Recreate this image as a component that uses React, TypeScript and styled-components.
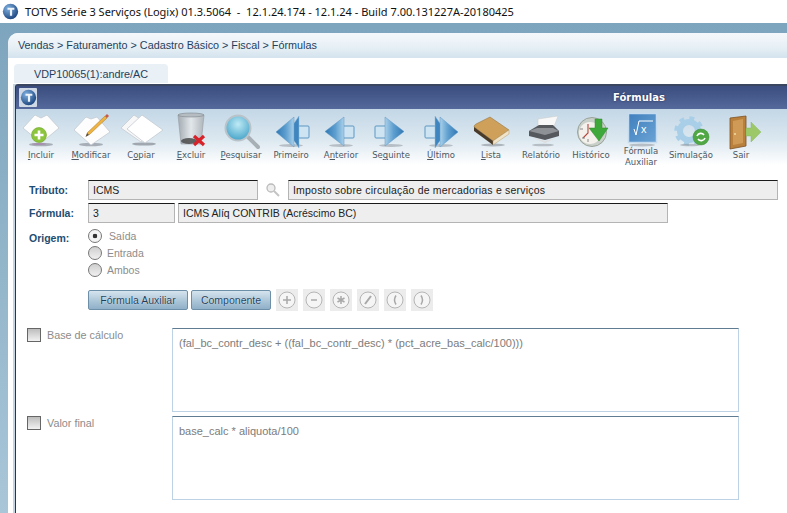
import React from "react";
import styled, { createGlobalStyle } from "styled-components";

const GlobalStyle = createGlobalStyle`
  html, body { margin: 0; padding: 0; background: #fff; }
  #root { width: 787px; height: 513px; overflow: hidden; }
`;

const Page = styled.div`
  width: 787px;
  height: 513px;
  display: flex;
  flex-direction: column;
  overflow: hidden;
  font-family: "Liberation Sans", Arial, sans-serif;
`;

const TitleBar = styled.div`
  height: 23px;
  flex: none;
  display: flex;
  align-items: center;
  gap: 6px;
  padding-left: 2px;
  background: #fff;
  color: #111;
  font-family: "Noto Sans", sans-serif;
  font-size: 11px;
  white-space: pre;
`;

const Shell = styled.div`
  flex: 1;
  min-height: 0;
  padding: 10px 0 0 8px;
  background: linear-gradient(#7da5bd, #a9c6d8);
  display: flex;
`;

const Panel = styled.div`
  flex: 1;
  min-width: 0;
  background: #fff;
  border-top-left-radius: 10px;
  display: flex;
  flex-direction: column;
`;

const Crumbs = styled.div`
  height: 25px;
  flex: none;
  box-sizing: border-box;
  padding: 0 0 2px 10px;
  display: flex;
  align-items: center;
  color: #1f3f5e;
  font-size: 10.8px;
  border-top-left-radius: 10px;
  background: linear-gradient(#f4f8fb, #e9f1f6 50%, #d4e3ee);
`;

const TabRow = styled.div`
  height: 19px;
  flex: none;
  margin-top: 6px;
  padding-left: 6px;
  display: flex;
`;

const Tab = styled.div`
  width: 154px;
  display: flex;
  align-items: center;
  justify-content: center;
  background: #e9f0f6;
  border-radius: 4px 4px 0 0;
  color: #1f3f5e;
  font-size: 10.8px;
`;

const WindowWrap = styled.div`
  flex: 1;
  min-height: 0;
  margin: 1px 0 0 5px;
  padding-left: 2px;
  background: #c3d4e2;
`;

const Frame = styled.div`
  height: 100%;
  background: #fff;
  border-left: 1px solid #1b3a5c;
  border-top: 2px solid #3a4660;
  border-top-left-radius: 3px;
  display: flex;
  flex-direction: column;
`;

const WindowBar = styled.div`
  height: 23px;
  flex: none;
  padding-left: 3px;
  display: flex;
  align-items: center;
  background: linear-gradient(#3a4d7e, #56699c);
`;

const LogoBox = styled.div`
  width: 18px;
  height: 19px;
  flex: none;
  display: flex;
  align-items: center;
  justify-content: center;
  background: #cfd9e6;
  border-radius: 1px;
`;

const WindowTitle = styled.div`
  margin-left: 576px;
  color: #fff;
  font-family: "DejaVu Sans", sans-serif;
  font-size: 10px;
  font-weight: bold;
  text-shadow: 0 0 2px #1c2a50;
`;

const Toolbar = styled.div`
  height: 56px;
  flex: none;
  padding-top: 1px;
  box-sizing: border-box;
  display: flex;
  background: linear-gradient(#c3d7e6, #dce8f0 55%, #fff);
`;

const ToolItem = styled.div`
  width: 50px;
  flex: none;
  display: flex;
  flex-direction: column;
  align-items: center;
  color: #4d5862;
`;

const ToolIcon = styled.svg`
  width: 40px;
  height: 35px;
  flex: none;
  overflow: visible;
`;

const ToolLabel = styled.div`
  height: 22px;
  margin-top: 1px;
  display: flex;
  align-items: center;
  text-align: center;
  font-family: "DejaVu Sans", sans-serif;
  font-size: 8.5px;
  line-height: 10.5px;
  white-space: nowrap;
  u { text-underline-offset: 1px; }
`;

const Form = styled.div`
  flex: 1;
  min-height: 0;
  padding: 15px 8px 0 13px;
  display: flex;
  flex-direction: column;
`;

const FieldRow = styled.div`
  height: 20px;
  margin-bottom: 3px;
  display: flex;
  align-items: stretch;
  gap: 3px;
`;

const FieldLabel = styled.div`
  width: 56px;
  flex: none;
  display: flex;
  align-items: center;
  color: #1d4d72;
  font-size: 10.5px;
  font-weight: bold;
`;

const Field = styled.div<{ $w: number; $track?: number }>`
  width: ${(p) => p.$w}px;
  flex: none;
  box-sizing: border-box;
  padding-left: 4px;
  display: flex;
  align-items: center;
  background: #eeeeee;
  border: 1px solid #b4b4b4;
  border-top-color: #1a1a1a;
  color: #222;
  font-size: 10.5px;
  letter-spacing: ${(p) => p.$track ?? 0}px;
`;

const SearchSlot = styled.svg`
  width: 24px;
  height: 20px;
  flex: none;
`;

const OriginRow = styled.div`
  display: flex;
  margin-top: 1px;
  height: 60px;
  gap: 3px;
`;

const OriginLabel = styled(FieldLabel)`
  height: 17px;
  margin-top: 2px;
`;

const RadioList = styled.div`
  display: flex;
  flex-direction: column;
`;

const RadioRow = styled.div`
  height: 17px;
  display: flex;
  align-items: center;
  gap: 5px;
  color: #8c8c8c;
  font-size: 10.5px;
`;

const RadioMark = styled.span<{ $on?: boolean }>`
  width: 14px;
  height: 14px;
  box-sizing: border-box;
  flex: none;
  border: 1px solid #777;
  border-radius: 50%;
  background: ${(p) =>
    p.$on
      ? "radial-gradient(circle, #333 0 2px, #f4f4f4 2.6px)"
      : "linear-gradient(#cfcfcf, #f0f0f0)"};
`;

const RadioText = styled.span<{ $on?: boolean }>`
  margin-left: ${(p) => (p.$on ? "2px" : "0")};
`;

const ActionRow = styled.div`
  height: 22px;
  margin: 2px 0 17px 59px;
  display: flex;
  align-items: center;
`;

const ActionButton = styled.div<{ $w: number }>`
  width: ${(p) => p.$w}px;
  height: 20px;
  margin-right: 3px;
  box-sizing: border-box;
  display: flex;
  align-items: center;
  justify-content: center;
  border: 1px solid #6d8fa8;
  border-radius: 2px;
  background: linear-gradient(#d6e4ee, #a9c3d6 60%, #8fb0c8);
  color: #1d3f5c;
  font-size: 10.5px;
  text-shadow: 0 0 1px #fff;
`;

const OpGroup = styled.div`
  margin-left: 2px;
  display: flex;
  gap: 5px;
`;

const OpButton = styled.div`
  width: 22px;
  height: 22px;
  display: flex;
  align-items: center;
  justify-content: center;
  background: #ececec;
`;

const OpIcon = styled.svg`
  width: 18px;
  height: 18px;
`;

const ExprRow = styled.div`
  height: 84px;
  margin-bottom: 4px;
  display: flex;
`;

const CheckCol = styled.div`
  width: 143px;
  flex: none;
  display: flex;
  align-items: flex-start;
  gap: 6px;
  color: #8c8c8c;
  font-size: 10.8px;
  margin: 0 2px 0 -2px;
`;

const CheckBox = styled.span`
  width: 14px;
  height: 14px;
  flex: none;
  box-sizing: border-box;
  border: 1px solid #666;
  background: linear-gradient(#bdbdbd, #f2f2f2);
`;

const CheckText = styled.span`
  line-height: 14px;
`;

const Expr = styled.div`
  width: 567px;
  flex: none;
  box-sizing: border-box;
  padding: 8px 6px;
  border: 1px solid #bdd2e4;
  border-top-color: #5f7c93;
  color: #7c7c7c;
  font-size: 11px;
  white-space: pre;
`;

const Logo = ({ size }: { size: number }) => (
  <svg width={size} height={size} viewBox="0 0 20 20" style={{ flex: "none" }}>
    <defs>
      <radialGradient id="logoG" cx="35%" cy="30%" r="80%">
        <stop offset="0" stopColor="#7fb0e0" />
        <stop offset="1" stopColor="#153e78" />
      </radialGradient>
    </defs>
    <circle cx="10" cy="10" r="9" fill="url(#logoG)" />
    <path d="M6.5 5.5h8v2.4h-2.6v7h-2.6v-7H6.5z" fill="#eef3f8" />
  </svg>
);

const Sheet = ({ d }: { d: string }) => (
  <>
    <ellipse cx="20" cy="34.500" rx="12" ry="1.800" fill="#7f848d" opacity=".6" />
    <path d={d} fill="#fdfdfd" stroke="#c4cad2" strokeWidth=".8" strokeLinejoin="round" />
  </>
);

// shared arrow drawing, pointing left; `dbl` adds the second head of Primeiro/Último
const Arrow = ({ id, dbl, flipAt }: { id: string; dbl?: boolean; flipAt?: number }) => (
  <>
    <defs>
      <linearGradient id={id} x1="0" y1="0" x2="1" y2="0">
        <stop offset="0" stopColor="#2f78b4" />
        <stop offset=".55" stopColor="#5f9fd0" />
        <stop offset="1" stopColor="#a9d0ea" />
      </linearGradient>
    </defs>
    <ellipse cx="20" cy="35.500" rx="12" ry="1.400" fill="#8a8f98" opacity=".5" />
    <g transform={flipAt ? `translate(${flipAt} 0) scale(-1 1)` : undefined}>
      <rect
        x={dbl ? 24 : 20}
        y="16"
        width={dbl ? 14 : 13}
        height="12"
        rx="1"
        fill="#cfe4f2"
        stroke="#5d97c3"
      />
      {dbl && <path d="M17 22 28 6v32z" fill="#3f86c0" stroke="#8fbbdb" strokeWidth=".5" />}
      <path
        d={dbl ? "M5 22 23 7v30z" : "M4 21.500 23 7v29z"}
        fill={`url(#${id})`}
        stroke="#5d97c3"
        strokeWidth=".5"
        strokeLinejoin="round"
      />
    </g>
  </>
);

const icons: Record<string, React.ReactNode> = {
  incluir: (
    <>
      <Sheet d="M2 18 14 5l6 3 6-3 12 13-18 15z" />
      <circle cx="18" cy="25" r="7.500" fill="#8cc43c" stroke="#6fa52a" strokeWidth=".6" />
      <path d="M18 20.500v9M13.500 25h9" stroke="#fff" strokeWidth="2.600" />
      <ellipse cx="18" cy="34" rx="7" ry="1" fill="#a77ca8" opacity=".6" />
    </>
  ),
  modificar: (
    <>
      <Sheet d="M3 20 15 7l5 2 6-2 13 15-19 13z" />
      <path d="M16 23 34 6l2 2-18 17z" fill="#eeb43f" stroke="#a9742a" strokeWidth=".5" />
      <path d="M34 6l2-2 2 2-2 2z" fill="#c85a4a" />
      <path d="M16 23l-1.500 4 3.500-2z" fill="#5a4a36" />
    </>
  ),
  copiar: (
    <>
      <ellipse cx="23" cy="34" rx="12" ry="1.600" fill="#7d828a" opacity=".65" />
      <path d="M0 18 13 5l20 13-13 14z" fill="#f7f7f7" stroke="#c4cad2" strokeWidth=".8" />
      <path d="M6 19 21 5l21 15-18 13z" fill="#fff" stroke="#c4cad2" strokeWidth=".8" />
    </>
  ),
  excluir: (
    <>
      <defs>
        <linearGradient id="canG" x1="0" x2="1" y1="0" y2="0">
          <stop offset="0" stopColor="#a3abb1" />
          <stop offset=".5" stopColor="#e2e7ea" />
          <stop offset="1" stopColor="#aeb5bb" />
        </linearGradient>
      </defs>
      <path d="M7 5h26l-3 29H10z" fill="url(#canG)" stroke="#959ca2" strokeWidth=".6" />
      <ellipse cx="20" cy="5" rx="13" ry="2" fill="#b5bcc2" stroke="#7f868c" strokeWidth=".6" />
      <ellipse cx="18" cy="31" rx="8" ry="3" fill="#4a4a4a" opacity=".85" />
      <path d="M23 26l10 9M33 26l-10 9" stroke="#d8222a" strokeWidth="3.200" />
    </>
  ),
  pesquisar: (
    <>
      <defs>
        <radialGradient id="lensG" cx="50%" cy="35%" r="70%">
          <stop offset="0" stopColor="#bfeaf5" />
          <stop offset="1" stopColor="#3d9fc6" />
        </radialGradient>
      </defs>
      <path d="M27 27l10 10" stroke="#a8b0b5" strokeWidth="4" strokeLinecap="round" />
      <circle cx="17" cy="18" r="12.500" fill="url(#lensG)" stroke="#b9c3c9" strokeWidth="2" />
    </>
  ),
  primeiro: <Arrow id="arrP" dbl />,
  anterior: <Arrow id="arrA" />,
  seguinte: <Arrow id="arrS" flipAt={37} />,
  ultimo: <Arrow id="arrU" dbl flipAt={42} />,
  lista: (
    <>
      <ellipse cx="22" cy="35" rx="12" ry="1.500" fill="#8a8f98" opacity=".6" />
      <path d="M3 17Q3 15 5 14L19 7 38 20 22 31z" fill="#cfa05a" stroke="#8d6a34" strokeWidth=".5" />
      <path d="M3 17v4l19 14v-4z" fill="#4a3a2a" />
      <path d="M22 31v4l16-11v-4z" fill="#f0e3c8" stroke="#a8905c" strokeWidth=".4" />
    </>
  ),
  relatorio: (
    <>
      <path d="M17 9 37 6l-5 13-15 0z" fill="#f8f8f8" stroke="#c9c9c9" strokeWidth=".5" />
      <path d="M8 21 18 15h14l6 6v5l-14 4-16-4z" fill="#55585c" />
      <path d="M8 21l16 4 14-4-6-3H16z" fill="#8e9195" />
      <path d="M10 27l14 6 11-5-11 3z" fill="#ddd" />
      <ellipse cx="22" cy="35" rx="11" ry="1.300" fill="#8a8f98" opacity=".5" />
    </>
  ),
  historico: (
    <>
      <circle cx="21" cy="22" r="14.500" fill="#c9cfc9" stroke="#9aa39a" />
      <circle cx="19" cy="23" r="11" fill="#f4f1ec" />
      <path d="M17 14v9l-5 5" stroke="#b4453c" strokeWidth="1.100" fill="none" />
      <path d="M9 19h3M11 28h3M17 32v-3" stroke="#888" strokeWidth="1" />
      <path d="M24 9h7v9h6L28 31 18 18h6z" fill="#3fa83a" stroke="#2c8a2c" strokeWidth=".5" />
    </>
  ),
  formula: (
    <>
      <defs>
        <linearGradient id="fxG" x1="0" y1="0" x2="1" y2="1">
          <stop offset="0" stopColor="#3f7fbe" />
          <stop offset="1" stopColor="#6ba3d4" />
        </linearGradient>
      </defs>
      <ellipse cx="21" cy="35" rx="13" ry="1.500" fill="#8a8f98" opacity=".5" />
      <rect x="7.500" y="3.500" width="28" height="29" fill="url(#fxG)" stroke="#c5dcf0" strokeWidth="1.500" />
      <path d="M13 19l2 6 3-14h14" stroke="#fff" strokeWidth="1" fill="none" />
      <text x="20" y="23" fontFamily="Liberation Sans" fontSize="11" fill="#fff">x</text>
    </>
  ),
  simulacao: (
    <>
      <circle cx="18" cy="21" r="9" fill="none" stroke="#a9cfe8" strokeWidth="6" />
      <circle
        cx="18"
        cy="21"
        r="13"
        fill="none"
        stroke="#a9cfe8"
        strokeWidth="3.500"
        strokeDasharray="5 5.200"
      />
      <ellipse cx="19" cy="35" rx="10" ry="1.300" fill="#8a8f98" opacity=".5" />
      <circle cx="30" cy="27" r="8" fill="#4fa843" stroke="#3c8a34" strokeWidth=".5" />
      <path d="M26 26a4 4 0 0 1 7-1M34 28a4 4 0 0 1-7 1" stroke="#fff" strokeWidth="1.600" fill="none" />
    </>
  ),
  sair: (
    <>
      <path d="M9 8 25 6v30l-16 3z" fill="#b9803c" stroke="#7d5224" strokeWidth=".8" />
      <path d="M12 11l10-2v24l-10 2z" fill="#cf9a55" />
      <circle cx="14" cy="24" r="1" fill="#f2dca0" />
      <path d="M25 18h5v-6l10 10-10 10v-6h-5z" fill="#9cc86a" stroke="#86b254" strokeWidth=".4" />
    </>
  ),
};

const tools: { icon: string; label: React.ReactNode }[] = [
  { icon: "incluir", label: <><u>I</u>ncluir</> },
  { icon: "modificar", label: <><u>M</u>odificar</> },
  { icon: "copiar", label: <>C<u>o</u>piar</> },
  { icon: "excluir", label: <><u>E</u>xcluir</> },
  { icon: "pesquisar", label: <><u>P</u>esquisar</> },
  { icon: "primeiro", label: "Primeiro" },
  { icon: "anterior", label: <>A<u>n</u>terior</> },
  { icon: "seguinte", label: <>Se<u>g</u>uinte</> },
  { icon: "ultimo", label: <><u>Ú</u>ltimo</> },
  { icon: "lista", label: <><u>L</u>ista</> },
  { icon: "relatorio", label: "Relatório" },
  { icon: "historico", label: "Histórico" },
  { icon: "formula", label: <>Fórmula<br />Auxiliar</> },
  { icon: "simulacao", label: "Simulação" },
  { icon: "sair", label: "Sair" },
];

const ops: React.ReactNode[] = [
  <path key="a" d="M9 5v8M5 9h8" />,
  <path key="b" d="M6 9h6" />,
  <path key="c" d="M9 5v8M5.500 7l7 4M12.500 7l-7 4" />,
  <path key="d" d="M6 13l6-8" strokeWidth="2" />,
  <path key="e" d="M10 4.500Q7 9 10 13.500" />,
  <path key="f" d="M8 4.500Q11 9 8 13.500" />,
];

export default function App() {
  return (
    <Page>
      <GlobalStyle />
      <TitleBar>
        <Logo size={17} />
        {"TOTVS Série 3 Serviços (Logix) 01.3.5064  -  12.1.24.174 - 12.1.24 - Build 7.00.131227A-20180425"}
      </TitleBar>
      <Shell>
        <Panel>
          <Crumbs>{"Vendas > Faturamento > Cadastro Básico > Fiscal > Fórmulas"}</Crumbs>
          <TabRow>
            <Tab>VDP10065(1):andre/AC</Tab>
          </TabRow>
          <WindowWrap>
            <Frame>
              <WindowBar>
                <LogoBox>
                  <Logo size={17} />
                </LogoBox>
                <WindowTitle>Fórmulas</WindowTitle>
              </WindowBar>
              <Toolbar>
                {tools.map((t) => (
                  <ToolItem key={t.icon}>
                    <ToolIcon viewBox="0 0 40 35">{icons[t.icon]}</ToolIcon>
                    <ToolLabel>
                      <span>{t.label}</span>
                    </ToolLabel>
                  </ToolItem>
                ))}
              </Toolbar>
              <Form>
                <FieldRow>
                  <FieldLabel>Tributo:</FieldLabel>
                  <Field $w={170}>ICMS</Field>
                  <SearchSlot viewBox="0 0 24 20">
                    <circle cx="10" cy="8" r="4" fill="#eee" stroke="#bbb" strokeWidth="1.300" />
                    <path d="M13 11l5 5" stroke="#c4c4c4" strokeWidth="2" />
                  </SearchSlot>
                  <Field $w={490} $track={0.2}>
                    Imposto sobre circulação de mercadorias e serviços
                  </Field>
                </FieldRow>
                <FieldRow>
                  <FieldLabel>Fórmula:</FieldLabel>
                  <Field $w={87}>3</Field>
                  <Field $w={490}>ICMS Alíq CONTRIB (Acréscimo BC)</Field>
                </FieldRow>
                <OriginRow>
                  <OriginLabel>Origem:</OriginLabel>
                  <RadioList>
                    <RadioRow>
                      <RadioMark $on />
                      <RadioText $on>Saída</RadioText>
                    </RadioRow>
                    <RadioRow>
                      <RadioMark />
                      <RadioText>Entrada</RadioText>
                    </RadioRow>
                    <RadioRow>
                      <RadioMark />
                      <RadioText>Ambos</RadioText>
                    </RadioRow>
                  </RadioList>
                </OriginRow>
                <ActionRow>
                  <ActionButton $w={100}>Fórmula Auxiliar</ActionButton>
                  <ActionButton $w={80}>Componente</ActionButton>
                  <OpGroup>
                    {ops.map((o, i) => (
                      <OpButton key={i}>
                        <OpIcon viewBox="0 0 18 18" fill="none" strokeWidth="1.500">
                          <circle cx="9" cy="9" r="8" stroke="#b5b5b5" strokeWidth="1" fill="#f5f5f5" />
                          <g stroke="#a8a8a8">{o}</g>
                        </OpIcon>
                      </OpButton>
                    ))}
                  </OpGroup>
                </ActionRow>
                <ExprRow>
                  <CheckCol>
                    <CheckBox />
                    <CheckText>Base de cálculo</CheckText>
                  </CheckCol>
                  <Expr>{"(fal_bc_contr_desc + ((fal_bc_contr_desc) * (pct_acre_bas_calc/100)))"}</Expr>
                </ExprRow>
                <ExprRow>
                  <CheckCol>
                    <CheckBox />
                    <CheckText>Valor final</CheckText>
                  </CheckCol>
                  <Expr>{"base_calc * aliquota/100"}</Expr>
                </ExprRow>
              </Form>
            </Frame>
          </WindowWrap>
        </Panel>
      </Shell>
    </Page>
  );
}
